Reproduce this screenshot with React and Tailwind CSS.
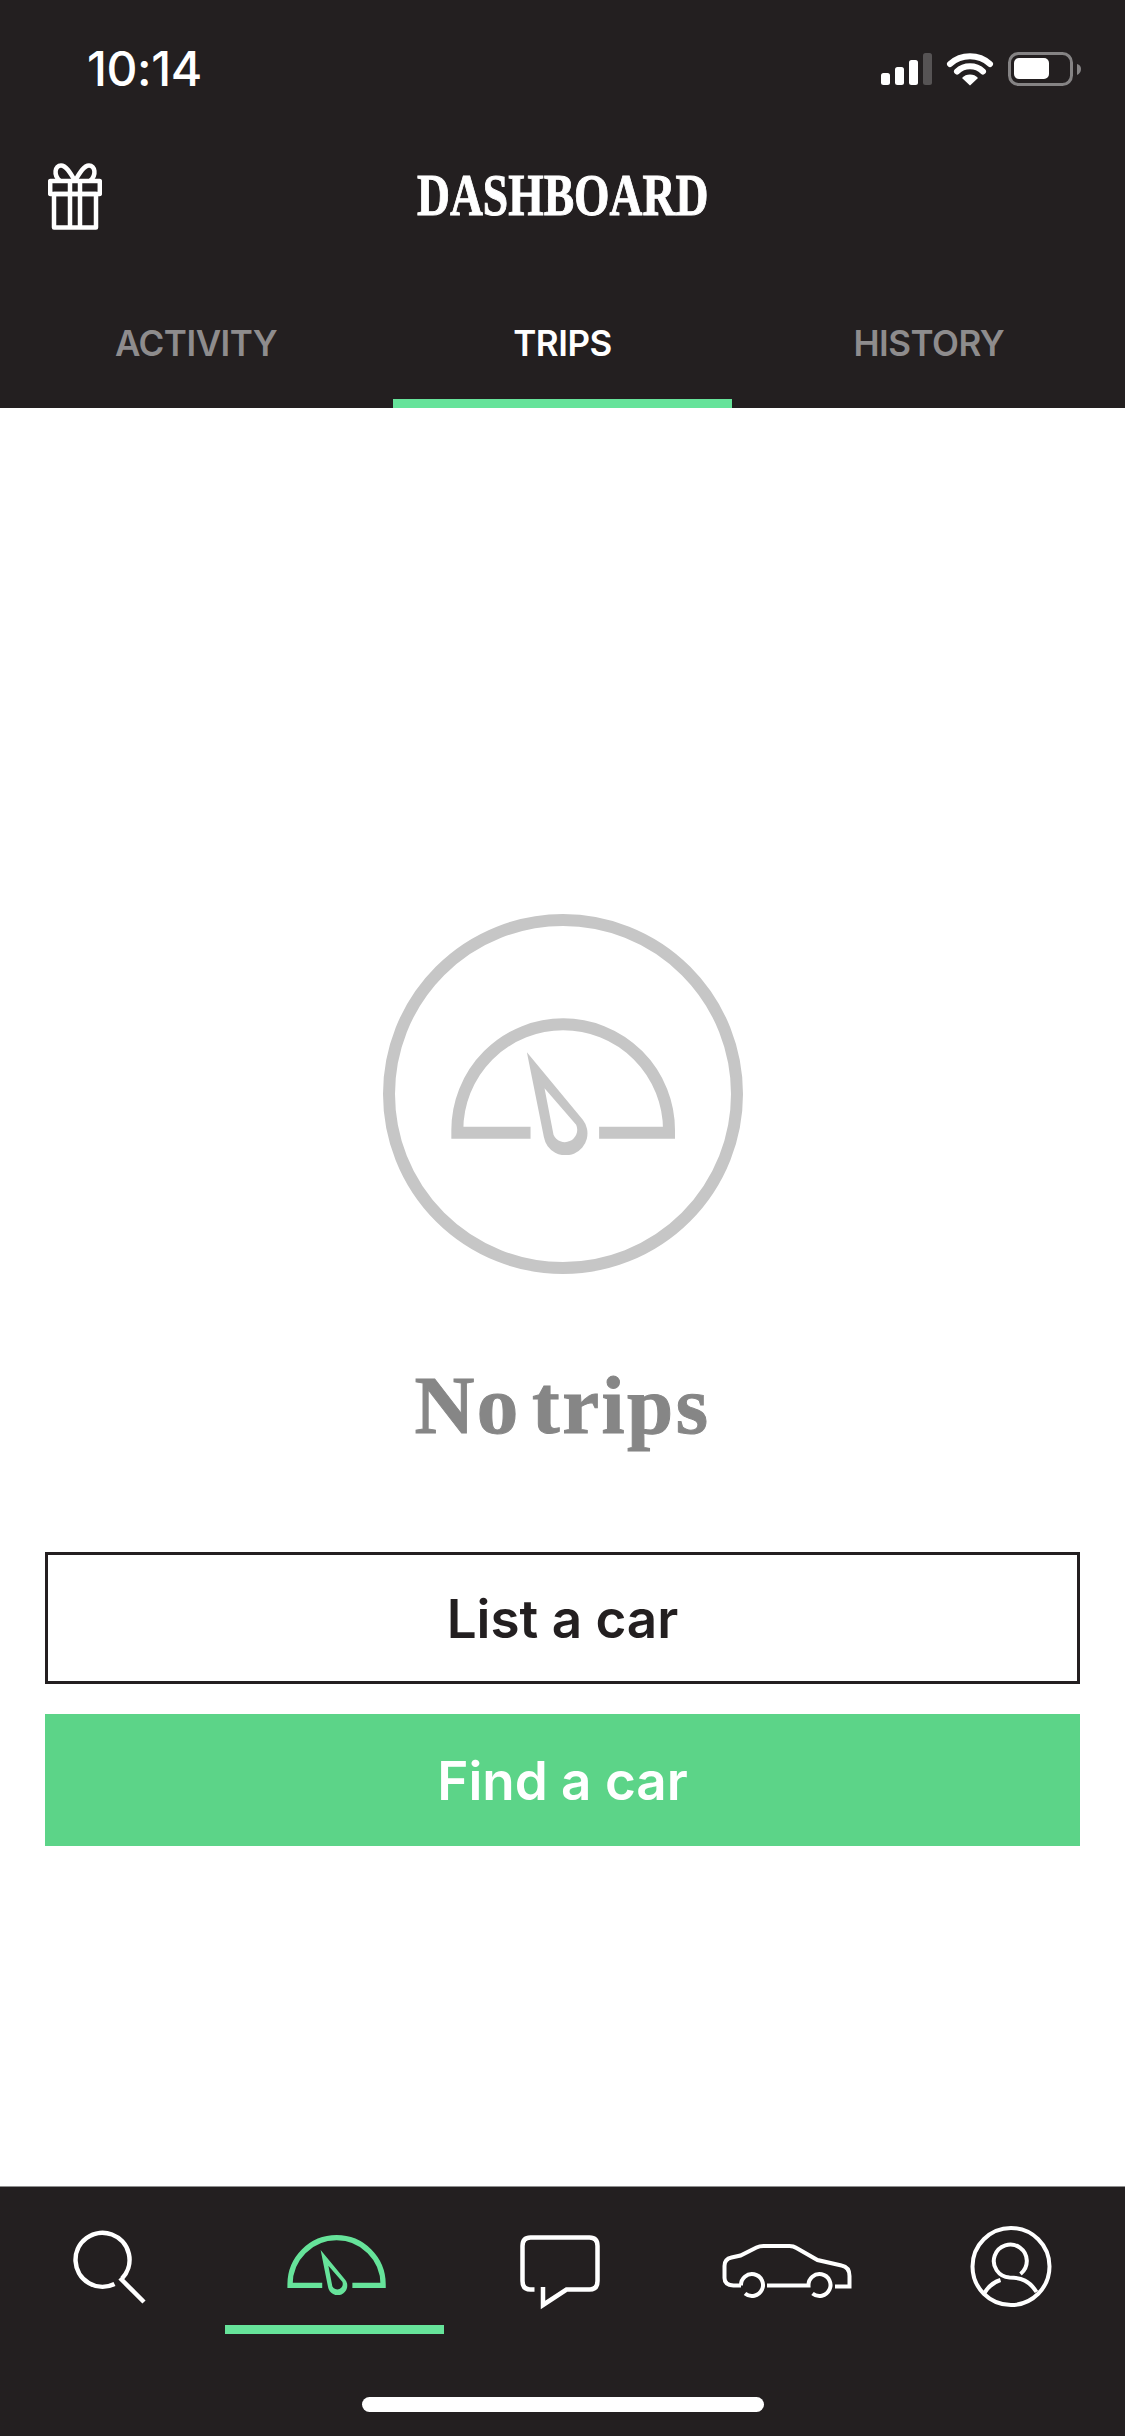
const gaugeArc = 'M511 729 H291 V721 A318 318 0 0 1 927 721 V729 H717'
const gaugeNeedle = 'M500 487 L668 690 A66 66 0 1 1 551 742 Z M553 595 L648 705 A36 36 0 1 1 580 735 Z'

function Gauge({ color, className }) {
  return (
    <svg viewBox="272 385 673 410" className={className} fill="none">
      <path d={gaugeArc} stroke={color} strokeWidth="36" />
      <path d={gaugeNeedle} fill={color} fillRule="evenodd" />
    </svg>
  )
}

function StatusIcons() {
  return (
    <svg viewBox="870 40 220 56" className="w-[220px] h-[56px]" fill="none">
      <rect x="881" y="73" width="9" height="12" rx="2.5" fill="#fff" />
      <rect x="895" y="67" width="9" height="18" rx="2.5" fill="#fff" />
      <rect x="909" y="60" width="9" height="25" rx="2.5" fill="#fff" />
      <rect x="923" y="53" width="9" height="32" rx="2.5" fill="#565354" />
      <path d="M950 64 A30 30 0 0 1 990 64" stroke="#fff" strokeWidth="6" strokeLinecap="round" />
      <path d="M957 71.5 A19 19 0 0 1 983 71.5" stroke="#fff" strokeWidth="6" strokeLinecap="round" />
      <path d="M962 78 A11 11 0 0 1 978 78 L970 85.5 Z" fill="#fff" />
      <rect x="1009.5" y="53.5" width="62" height="31" rx="9" stroke="#858384" strokeWidth="3" />
      <rect x="1014" y="58" width="35" height="21" rx="5" fill="#fff" />
      <path d="M1077 64 Q1081 65 1081 69 Q1081 73 1077 75 Z" fill="#858384" />
    </svg>
  )
}

function GiftIcon() {
  return (
    <svg viewBox="48 163 54 67" className="w-[54px] h-[67px]" fill="none" stroke="#fff" strokeWidth="4.5" strokeLinejoin="round">
      <rect x="50.2" y="181" width="49.6" height="13" />
      <rect x="54" y="194" width="42" height="33.5" />
      <path d="M70 181 V227.5 M80 181 V227.5" />
      <path d="M75 181 C70 172 66 165.5 61 165.5 C55 165.5 53 175 60 181" />
      <path d="M75 181 C80 172 84 165.5 89 165.5 C95 165.5 97 175 90 181" />
    </svg>
  )
}

function SearchIcon() {
  return (
    <svg viewBox="42 2216 140 100" className="w-[140px] h-[100px]" fill="none" stroke="#fff" strokeWidth="4.5">
      <path d="M113.5 2284 A27 27 0 1 1 121 2278.5" />
      <path d="M119 2278 L143 2302" />
    </svg>
  )
}

function ChatIcon() {
  return (
    <svg viewBox="493.5 2216 140 100" className="w-[140px] h-[100px]" fill="none" stroke="#fff" strokeWidth="4.5">
      <path d="M535 2289.5 H531 Q523 2289.5 523 2281 V2246 Q523 2237.5 531 2237.5 H590 Q598 2237.5 598 2246 V2281 Q598 2289.5 590 2289.5 H567 L543.5 2305 V2287" />
    </svg>
  )
}

function CarIcon() {
  return (
    <svg viewBox="718.5 2216 140 100" className="w-[140px] h-[100px]" fill="none" stroke="#fff" strokeWidth="4">
      <path d="M741.5 2285.5 H734 Q725 2285 725 2278 V2266 Q725 2259 732 2257.5 L741 2255.5 L757 2247.5 Q760 2246 764 2246 H790 Q794 2246 797 2248 L818 2260 L842 2265.5 Q850 2267 850 2276 V2286.5 H835.5" />
      <path d="M741.5 2285.5 A11 11 0 1 1 745.5 2293.5" />
      <path d="M767.5 2285.5 H809 A11 11 0 1 1 813 2293.5" />
    </svg>
  )
}

function ProfileIcon() {
  return (
    <svg viewBox="943.5 2216 140 100" className="w-[140px] h-[100px]" fill="none" stroke="#fff" strokeWidth="4">
      <circle cx="1011.5" cy="2266.5" r="38.5" />
      <path d="M1021 2274 A16.5 16.5 0 1 0 1010 2277.5 C1022 2277.5 1030 2281 1037 2292" />
      <path d="M985 2293 Q991 2283 1001 2280" />
    </svg>
  )
}

function Tab({ label, active }) {
  return (
    <div className="flex flex-col items-center">
      <span className={`h-[48px] text-[35px] leading-[48px] font-semibold tracking-[-0.5px] font-['Inter',sans-serif] ${active ? 'text-white' : 'text-[#8e8c8d]'}`}>
        {label}
      </span>
      <div className={`mt-[32px] w-[339px] h-[9px] ${active ? 'bg-[#66e39a]' : ''}`} />
    </div>
  )
}

export default function App() {
  return (
    <div className="w-[1125px] h-[2436px] flex flex-col bg-white overflow-hidden">
      <header className="h-[408px] bg-[#231f20] flex flex-col">
        <div className="h-[141px] flex justify-between pl-[87px] pr-[35px] pt-[40px]">
          <span className="text-[48px] leading-[58px] font-medium tracking-[-0.4px] text-white font-['Inter',sans-serif]">10:14</span>
          <StatusIcons />
        </div>
        <div className="h-[111px] grid grid-cols-[1fr_auto_1fr] items-center pl-[48px]">
          <GiftIcon />
          <h1 className="inline-block mb-[3px] scale-x-[0.76] text-[60px] leading-[70px] font-bold text-white [-webkit-text-stroke:1px_#fff] font-['Liberation_Serif',serif] -translate-x-[24px]">
            DASHBOARD
          </h1>
        </div>
        <nav className="mt-[67px] px-[13px] grid grid-cols-3">
          <Tab label="ACTIVITY" />
          <Tab label="TRIPS" active />
          <Tab label="HISTORY" />
        </nav>
      </header>

      <main className="flex-1 flex flex-col items-center pt-[506px] px-[45px]">
        <div className="w-[360px] h-[360px] rounded-full border-[12px] border-[#c6c6c6] flex flex-col items-center">
          <Gauge color="#c6c6c6" className="mt-[92px] w-[224px] h-[137px]" />
        </div>
        <h2 className="mt-[83px] mb-[5px] text-[83px] leading-[96px] font-bold tracking-[2.5px] [word-spacing:-12px] [-webkit-text-stroke:1px_#868686] text-[#868686] font-['Liberation_Serif',serif]">
          No trips
        </h2>
        <button className="mt-[94px] pt-[3px] w-full h-[132px] border-[3px] border-[#231f20] bg-white text-[53px] font-semibold text-[#231f20] font-['Inter',sans-serif]">
          List a car
        </button>
        <button className="mt-[30px] pt-[3px] w-full h-[132px] bg-[#5cd488] text-[53px] font-semibold text-white font-['Inter',sans-serif]">
          Find a car
        </button>
      </main>

      <footer className="h-[250px] bg-[#231f20] border-t border-[#8f8f8f] flex flex-col">
        <div className="mt-[29px] grid grid-cols-5">
          <div className="flex justify-center"><SearchIcon /></div>
          <div className="flex justify-center"><Gauge color="#66e39a" className="mt-[19px] mr-[3px] w-[99px] h-[60px]" /></div>
          <div className="flex justify-center"><ChatIcon /></div>
          <div className="flex justify-center"><CarIcon /></div>
          <div className="flex justify-center"><ProfileIcon /></div>
        </div>
        <div className="mt-[9px] ml-[225px] w-[219px] h-[9px] bg-[#66e39a]" />
        <div className="mt-[63px] ml-[362px] w-[402px] h-[15px] rounded-full bg-white" />
      </footer>
    </div>
  )
}
